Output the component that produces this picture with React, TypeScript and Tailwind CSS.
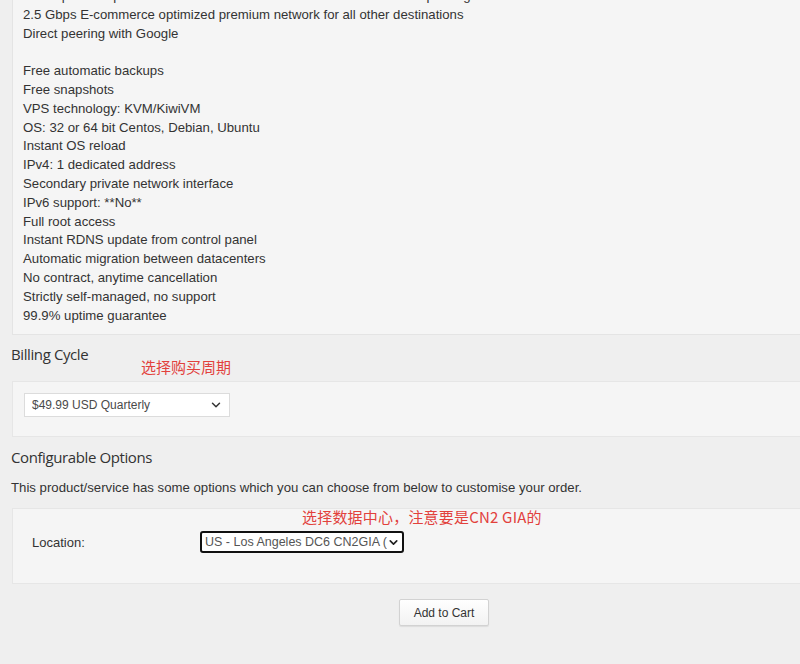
import { ChevronDown } from 'lucide-react'

const features = [
  'Dual-upstream premium China Telecom CN2 GIA and China Unicom peering for traffic to China',
  '2.5 Gbps E-commerce optimized premium network for all other destinations',
  'Direct peering with Google',
  '',
  'Free automatic backups',
  'Free snapshots',
  'VPS technology: KVM/KiwiVM',
  'OS: 32 or 64 bit Centos, Debian, Ubuntu',
  'Instant OS reload',
  'IPv4: 1 dedicated address',
  'Secondary private network interface',
  'IPv6 support: **No**',
  'Full root access',
  'Instant RDNS update from control panel',
  'Automatic migration between datacenters',
  'No contract, anytime cancellation',
  'Strictly self-managed, no support',
  '99.9% uptime guarantee',
]

const body = "font-['Liberation_Sans',Arial,sans-serif] text-[#333]"
const heading = "font-['Open_Sans','Noto_Sans',sans-serif] text-[15px] tracking-[-0.4px] text-[#333]"
const note = "font-['Noto_Sans_CJK_SC','Liberation_Sans',sans-serif] text-[15px] text-[#e2413c]"

export default function App() {
  return (
    <div className={`w-[800px] h-[664px] overflow-hidden bg-[#efefef] pl-[11px] ${body}`}>
      {/* product description */}
      <div className="-mt-[24px] ml-px border border-r-0 border-[#e4e4e4] bg-[#f5f5f5] pl-[10px] pt-[10px] pb-[9px] text-[13.2px] leading-[18.8px]">
        {features.map((line, i) => (
          <div key={i} className="h-[18.8px] whitespace-nowrap">
            {line}
          </div>
        ))}
      </div>

      {/* billing cycle */}
      <div className="relative">
        <h3 className={`${heading} mt-[8px] leading-[22px] h-[22px]`}>Billing Cycle</h3>
        <span className={`${note} absolute left-[130px] top-[14px] leading-[20px]`}>选择购买周期</span>
      </div>
      <div className="mt-[16px] ml-px h-[56px] border border-r-0 border-[#e6e6e6] bg-[#f5f5f5] pl-[11px] pt-[11px]">
        <div className="flex h-[24px] w-[206px] items-center justify-between border border-[#dcdcdc] bg-white pl-[7px] pr-[6px] text-[12px] text-[#4a4a4a]">
          <span>$49.99 USD Quarterly</span>
          <ChevronDown className="h-[14px] w-[14px] text-[#333]" strokeWidth={2.5} />
        </div>
      </div>

      {/* configurable options */}
      <h3 className={`${heading} mt-[9px] leading-[22px] h-[22px]`}>Configurable Options</h3>
      <p className="mt-[10px] text-[13.2px] leading-[20px]">
        This product/service has some options which you can choose from below to customise your order.
      </p>
      <div className="relative mt-[10px] ml-px h-[76px] border border-r-0 border-[#e6e6e6] bg-[#f5f5f5]">
        <span className={`${note} absolute left-[289px] top-[-2px] leading-[20px] tracking-[0.2px]`}>选择数据中心，注意要是CN2 GIA的</span>
        <div className="flex items-center pt-[22px] pl-[19px]">
          <span className="w-[168px] text-[13px]">Location:</span>
          <div className="flex h-[22px] w-[204px] items-center justify-between overflow-hidden rounded-[3px] border-2 border-[#111] bg-white pl-[3px] pr-[3px] text-[12.5px] text-[#555]">
            <span className="whitespace-nowrap">US - Los Angeles DC6 CN2GIA (</span>
            <ChevronDown className="h-[13px] w-[13px] shrink-0 text-[#222] bg-white" strokeWidth={3} />
          </div>
        </div>
      </div>

      {/* submit */}
      <div className="mt-[15px] pl-[388px]">
        <button className="h-[27px] w-[90px] rounded-[2px] border border-[#d2d2d2] bg-gradient-to-b from-white to-[#f2f2f2] text-[12px] text-[#333] shadow-[0_1px_1px_rgba(0,0,0,0.08)]">
          Add to Cart
        </button>
      </div>
    </div>
  )
}
